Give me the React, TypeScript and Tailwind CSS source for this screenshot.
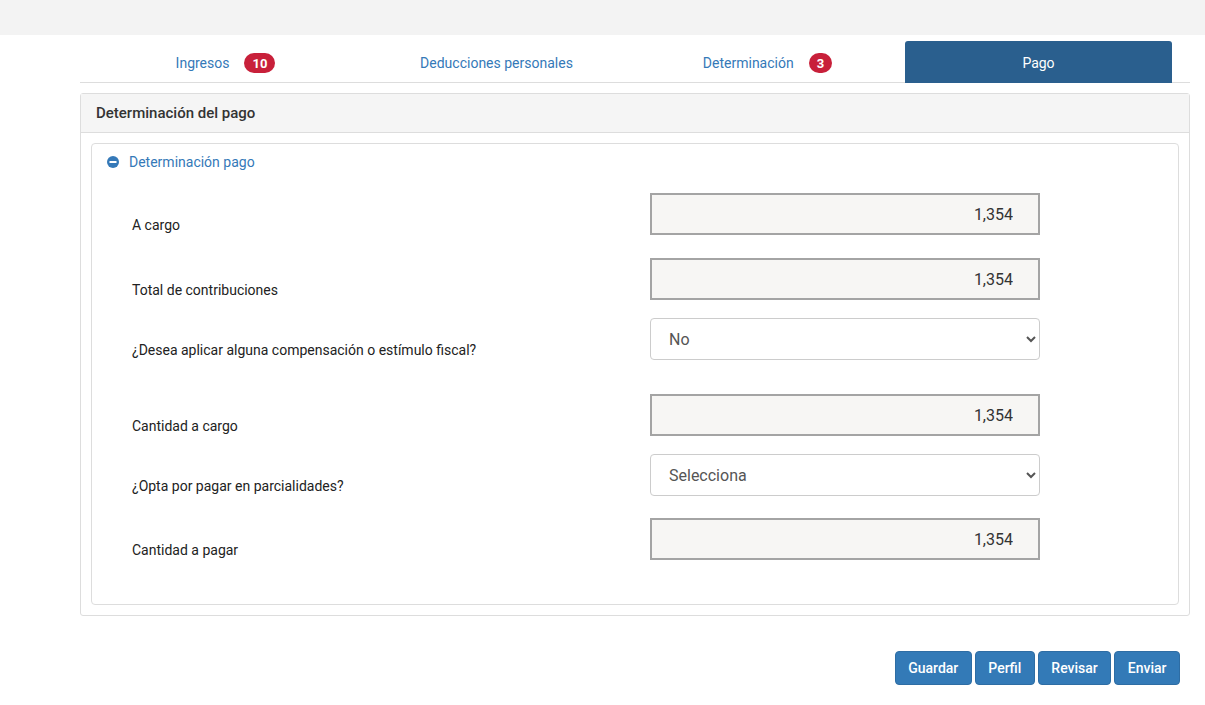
import React from "react";

const font = { fontFamily: "Roboto, 'Noto Sans', sans-serif" };

const Badge = ({ n }: { n: string }) => (
  <span className="ml-[15px] inline-flex h-[20px] min-w-[21px] items-center justify-center rounded-full bg-[#c8203a] px-[8px] text-[13px] font-bold leading-none text-white">
    {n}
  </span>
);

const tabs = [
  { label: "Ingresos", badge: "10" },
  { label: "Deducciones personales" },
  { label: "Determinación", badge: "3" },
  { label: "Pago", active: true },
];

const ReadOnly = ({ value }: { value: string }) => (
  <input
    readOnly
    value={value}
    className="h-[42px] w-[390px] border-2 border-[#a4a4a4] bg-[#f7f6f4] pr-[25px] text-right text-[16px] text-[#333] outline-none"
  />
);

const Select = ({ options }: { options: string[] }) => (
  <select className="h-[42px] w-[390px] rounded-[4px] border border-[#cccccc] bg-white pl-[14px] text-[16px] text-[#555]">
    {options.map((o) => (
      <option key={o}>{o}</option>
    ))}
  </select>
);

const Row = ({ label, children, mt }: { label: string; children: React.ReactNode; mt: string }) => (
  <div className={`flex items-start ${mt}`}>
    <div className="w-[518px] pt-[22px] text-[14px] leading-5 text-[#222]">{label}</div>
    {children}
  </div>
);

export default function App() {
  return (
    <div className="min-h-screen bg-white" style={font}>
      <div className="h-[35px] bg-[#f3f3f3]" />
      <div className="ml-[80px] w-[1110px]">
        {/* tabs */}
        <div className="mt-[6px] flex border-b border-[#dddddd] pl-[10px]">
          {tabs.map((t) =>
            t.active ? (
              <div key={t.label} className="w-[271px] px-[2px]">
                <div className="-mb-px flex h-[42px] items-center justify-center rounded-t-[3px] bg-[#2a5f8e] pt-[2px] text-[14px] text-white">
                  {t.label}
                </div>
              </div>
            ) : (
              <div key={t.label} className="flex h-[41px] w-[271px] items-center justify-center pt-[3px] text-[14px] text-[#3579b8]">
                {t.label}
                {t.badge && <Badge n={t.badge} />}
              </div>
            )
          )}
        </div>

        {/* panel */}
        <div className="mt-[10px] rounded-[3px] border border-[#dddddd]">
          <div className="flex h-[39px] items-center border-b border-[#dddddd] bg-[#f5f5f5] px-[15px] text-[15px] font-medium text-[#333]">
            Determinación del pago
          </div>
          <div className="p-[10px]">
            <div className="rounded-[4px] border border-[#dddddd] pb-[44px] pl-[40px] pt-[8px]">
              <div className="-ml-[25px] flex h-[20px] items-center text-[14px] text-[#3579b8]">
                <svg width="12" height="12" viewBox="0 0 12 12" className="mr-[10px]">
                  <circle cx="6" cy="6" r="6" fill="#3579b8" />
                  <rect x="2.5" y="5" width="7" height="2" fill="#fff" />
                </svg>
                Determinación pago
              </div>
              <Row label="A cargo" mt="mt-[21px]">
                <ReadOnly value="1,354" />
              </Row>
              <Row label="Total de contribuciones" mt="mt-[23px]">
                <ReadOnly value="1,354" />
              </Row>
              <Row label="¿Desea aplicar alguna compensación o estímulo fiscal?" mt="mt-[18px]">
                <Select options={["No", "Sí"]} />
              </Row>
              <Row label="Cantidad a cargo" mt="mt-[34px]">
                <ReadOnly value="1,354" />
              </Row>
              <Row label="¿Opta por pagar en parcialidades?" mt="mt-[18px]">
                <Select options={["Selecciona", "Sí", "No"]} />
              </Row>
              <Row label="Cantidad a pagar" mt="mt-[22px]">
                <ReadOnly value="1,354" />
              </Row>
            </div>
          </div>
        </div>

        {/* actions */}
        <div className="mt-[35px] flex justify-end gap-[3px] pr-[10px]">
          {["Guardar", "Perfil", "Revisar", "Enviar"].map((b) => (
            <button
              key={b}
              className="h-[34px] rounded-[4px] border border-[#2e6da4] bg-[#337ab7] px-[12.5px] text-[14px] font-medium text-white"
            >
              {b}
            </button>
          ))}
        </div>
      </div>
    </div>
  );
}
